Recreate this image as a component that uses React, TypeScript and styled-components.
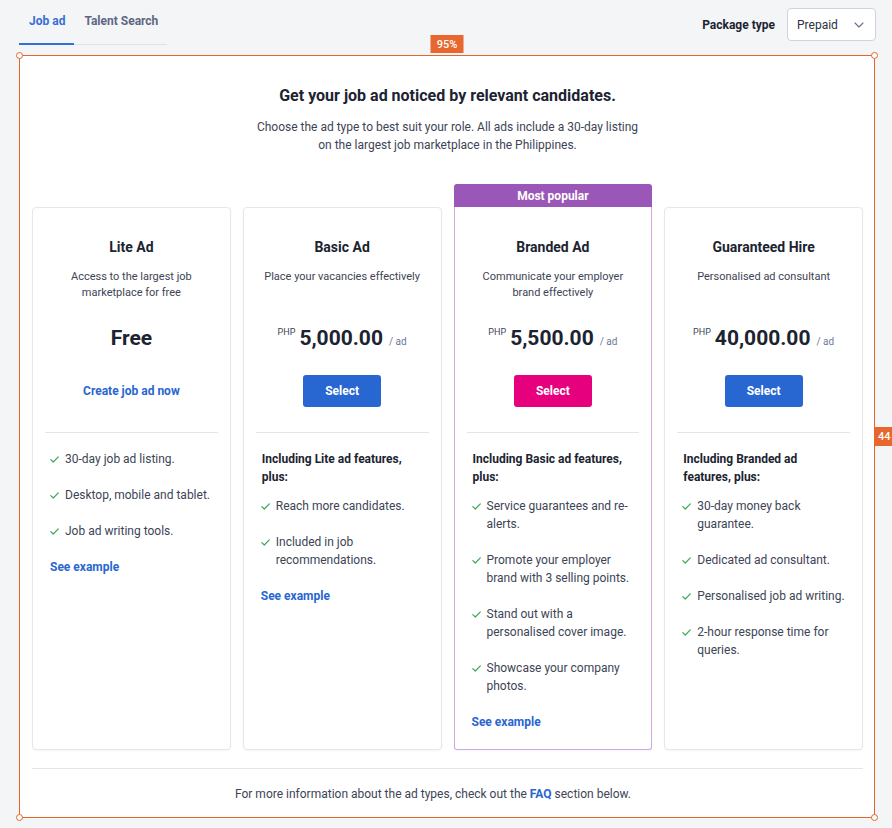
import React from "react";
import styled, { createGlobalStyle } from "styled-components";

const GlobalStyle = createGlobalStyle`
  html, body {
    margin: 0;
    padding: 0;
    overflow: hidden;
    background: #f4f5f7;
  }
  body {
    font-family: Roboto, "Liberation Sans", Arial, sans-serif;
    color: #1c2331;
    -webkit-font-smoothing: antialiased;
  }
  * { box-sizing: border-box; }
`;

const Page = styled.div`
  width: 892px;
  height: 828px;
  padding: 0 17px 0 19px;
  background: #f4f5f7;
`;

const Header = styled.div`
  display: flex;
  justify-content: space-between;
  align-items: flex-start;
  height: 45px;
`;

const TabList = styled.div`
  display: flex;
  border-bottom: 1px solid #dfe2e8;
`;

const Tab = styled.div<{ $active?: boolean }>`
  padding: 13px 9px 14px 10px;
  line-height: 16px;
  font-size: 12px;
  font-weight: 700;
  color: ${(p) => (p.$active ? "#3570d8" : "#5d6781")};
  border-bottom: 2px solid ${(p) => (p.$active ? "#3570d8" : "transparent")};
  margin-bottom: -1px;
`;

const PackageGroup = styled.div`
  display: flex;
  align-items: center;
  gap: 12px;
  margin-top: 8px;
`;

const PackageLabel = styled.span`
  font-size: 12px;
  font-weight: 700;
  color: #1c2331;
`;

const SelectBox = styled.div`
  width: 89px;
  height: 33px;
  background: #fff;
  border: 1px solid #cfd3da;
  border-radius: 4px;
  display: flex;
  align-items: center;
  justify-content: space-between;
  padding: 0 11px 0 9px;
  font-size: 12px;
  color: #2b3240;
  margin-right: -1px;
`;

const Panel = styled.div`
  position: relative;
  margin-top: 10px;
  background: #fff;
  padding: 31px 12px 16px 13px;
  height: 763px;
  display: flex;
  flex-direction: column;
`;

const Overlay = styled.div`
  position: absolute;
  inset: 0;
  border: 1px solid #e3662d;
  pointer-events: none;
`;

const Handle = styled.span<{ $top?: boolean; $left?: boolean }>`
  position: absolute;
  width: 7px;
  height: 7px;
  border-radius: 50%;
  background: #fff;
  border: 1px solid #e3662d;
  ${(p) => (p.$top ? "top: -4px;" : "bottom: -4px;")}
  ${(p) => (p.$left ? "left: -4px;" : "right: -4px;")}
`;

const TopBadge = styled.span`
  position: absolute;
  top: -21px;
  left: 50%;
  transform: translateX(-50%);
  width: 33px;
  height: 18px;
  background: #e8672e;
  color: #fff;
  font-size: 11px;
  font-weight: 500;
  display: flex;
  align-items: center;
  justify-content: center;
`;

const SideBadge = styled.span`
  position: absolute;
  top: 371px;
  left: calc(100% + 1px);
  width: 26px;
  height: 19px;
  background: #e8672e;
  color: #fff;
  font-size: 11px;
  font-weight: 500;
  display: flex;
  align-items: center;
  padding-left: 3px;
`;

const Heading = styled.h1`
  margin: 0;
  text-align: center;
  font-size: 16px;
  line-height: 20px;
  font-weight: 700;
  color: #1c2331;
`;

const Subtitle = styled.p`
  margin: 12px auto 0;
  width: 388px;
  text-align: center;
  font-size: 12px;
  line-height: 18px;
  color: #3d4455;
`;

const CardGrid = styled.div`
  margin-top: 30px;
  display: grid;
  grid-template-columns: repeat(4, 1fr);
  gap: 12px;
  flex: 1;
`;

const CardColumn = styled.div<{ $popular?: boolean }>`
  display: flex;
  flex-direction: column;
  padding-top: ${(p) => (p.$popular ? "0" : "23px")};
`;

const Banner = styled.div`
  height: 23px;
  background: #9a57b7;
  color: #fff;
  font-size: 12px;
  font-weight: 700;
  display: flex;
  align-items: center;
  justify-content: center;
  border-radius: 3px 3px 0 0;
`;

const Card = styled.div<{ $popular?: boolean }>`
  flex: 1;
  display: flex;
  flex-direction: column;
  background: #fff;
  border: 1px solid ${(p) => (p.$popular ? "#cfa9e0" : "#e5e7eb")};
  border-radius: ${(p) => (p.$popular ? "0 0 3px 3px" : "4px")};
  ${(p) => (p.$popular ? "border-top: none;" : "")}
  box-shadow: 0 1px 2px rgba(20, 30, 50, 0.04);
  padding-top: ${(p) => (p.$popular ? "30px" : "29px")};
`;

const CardTop = styled.div`
  display: flex;
  flex-direction: column;
  align-items: center;
  text-align: center;
`;

const CardTitle = styled.h2`
  margin: 0;
  font-size: 14px;
  line-height: 20px;
  font-weight: 700;
  color: #1c2331;
`;

const CardDesc = styled.p`
  margin: 12px 0 0;
  padding: 0 18px;
  min-height: 32px;
  font-size: 11px;
  line-height: 16px;
  color: #3d4455;
`;

const PriceRow = styled.div`
  margin-top: 23px;
  height: 28px;
  line-height: 28px;
  white-space: nowrap;
`;

const Currency = styled.span`
  font-size: 9px;
  line-height: 16px;
  vertical-align: top;
  color: #3d4455;
  margin-right: 4px;
`;

const Amount = styled.span`
  font-size: 21px;
  font-weight: 700;
  color: #1c2331;
`;

const Per = styled.span`
  font-size: 10px;
  color: #6b7a99;
  margin-left: 6px;
`;

const ActionRow = styled.div`
  margin-top: 23px;
  height: 32px;
  display: flex;
  align-items: center;
  justify-content: center;
`;

const Button = styled.button<{ $pink?: boolean }>`
  height: 32px;
  padding: 0 22px;
  border: none;
  border-radius: 3px;
  background: ${(p) => (p.$pink ? "#e6007e" : "#2866d1")};
  color: #fff;
  font-family: inherit;
  font-size: 12px;
  font-weight: 700;
`;

const TextLink = styled.a`
  font-size: 12px;
  font-weight: 700;
  line-height: 18px;
  color: #2866d1;
  text-decoration: none;
`;

const CardDivider = styled.hr`
  margin: 25px 12px 0;
  border: none;
  border-top: 1px solid #e3e5e9;
`;

const CardBottom = styled.div`
  padding: 17px 14px 18px 17px;
  display: flex;
  flex-direction: column;
  align-items: flex-start;
`;

const FeatureHeading = styled.div`
  font-size: 12px;
  line-height: 18px;
  font-weight: 700;
  color: #1c2331;
  margin-bottom: 11px;
  padding-left: 1px;
  padding-right: 4px;
`;

const FeatureList = styled.ul`
  list-style: none;
  margin: 0 0 18px;
  padding: 0;
  display: flex;
  flex-direction: column;
  gap: 18px;
`;

const FeatureItem = styled.li`
  display: flex;
  align-items: flex-start;
  gap: 6px;
  font-size: 12px;
  line-height: 18px;
  color: #3d4455;
`;

const CheckWrap = styled.span`
  flex: none;
  width: 9px;
  height: 18px;
  display: flex;
  align-items: center;
`;

const Footer = styled.div`
  margin-top: 18px;
  border-top: 1px solid #e3e5e9;
  padding: 16px 29px 0 0;
  text-align: center;
  font-size: 12px;
  line-height: 18px;
  color: #3d4455;
`;

const FooterLink = styled.a`
  color: #2866d1;
  font-weight: 700;
  text-decoration: none;
`;

const Check = () => (
  <CheckWrap>
    <svg width="9" height="7" viewBox="0 0 9 7" fill="none">
      <path d="M0.8 3.6 L3.3 6 L8.3 0.9" stroke="#3fa85a" strokeWidth="1.2" strokeLinecap="round" strokeLinejoin="round" />
    </svg>
  </CheckWrap>
);

const Chevron = () => (
  <svg width="10" height="6" viewBox="0 0 10 6" fill="none">
    <path d="M1 1 L5 5 L9 1" stroke="#6b7385" strokeWidth="1.1" strokeLinecap="round" strokeLinejoin="round" />
  </svg>
);

type Plan = {
  title: string;
  desc: string;
  price?: string;
  free?: boolean;
  popular?: boolean;
  heading?: string;
  features: string[];
  example: boolean;
};

const plans: Plan[] = [
  {
    title: "Lite Ad",
    desc: "Access to the largest job marketplace for free",
    free: true,
    features: ["30-day job ad listing.", "Desktop, mobile and tablet.", "Job ad writing tools."],
    example: true,
  },
  {
    title: "Basic Ad",
    desc: "Place your vacancies effectively",
    price: "5,000.00",
    heading: "Including Lite ad features, plus:",
    features: ["Reach more candidates.", "Included in job recommendations."],
    example: true,
  },
  {
    title: "Branded Ad",
    desc: "Communicate your employer brand effectively",
    price: "5,500.00",
    popular: true,
    heading: "Including Basic ad features, plus:",
    features: [
      "Service guarantees and re-alerts.",
      "Promote your employer brand with 3 selling points.",
      "Stand out with a personalised cover image.",
      "Showcase your company photos.",
    ],
    example: true,
  },
  {
    title: "Guaranteed Hire",
    desc: "Personalised ad consultant",
    price: "40,000.00",
    heading: "Including Branded ad features, plus:",
    features: [
      "30-day money back guarantee.",
      "Dedicated ad consultant.",
      "Personalised job ad writing.",
      "2-hour response time for queries.",
    ],
    example: false,
  },
];

const PlanCard = ({ plan }: { plan: Plan }) => (
  <CardColumn $popular={plan.popular}>
    {plan.popular && <Banner>Most popular</Banner>}
    <Card $popular={plan.popular}>
      <CardTop>
        <CardTitle>{plan.title}</CardTitle>
        <CardDesc>{plan.desc}</CardDesc>
        <PriceRow>
          {plan.free ? (
            <Amount>Free</Amount>
          ) : (
            <>
              <Currency>PHP</Currency>
              <Amount>{plan.price}</Amount>
              <Per>/ ad</Per>
            </>
          )}
        </PriceRow>
        <ActionRow>
          {plan.free ? (
            <TextLink href="#">Create job ad now</TextLink>
          ) : (
            <Button $pink={plan.popular}>Select</Button>
          )}
        </ActionRow>
      </CardTop>
      <CardDivider />
      <CardBottom>
        {plan.heading && <FeatureHeading>{plan.heading}</FeatureHeading>}
        <FeatureList>
          {plan.features.map((f) => (
            <FeatureItem key={f}>
              <Check />
              <span>{f}</span>
            </FeatureItem>
          ))}
        </FeatureList>
        {plan.example && <TextLink href="#">See example</TextLink>}
      </CardBottom>
    </Card>
  </CardColumn>
);

export default function App() {
  return (
    <>
      <GlobalStyle />
      <Page>
        <Header>
          <TabList>
            <Tab $active>Job ad</Tab>
            <Tab>Talent Search</Tab>
          </TabList>
          <PackageGroup>
            <PackageLabel>Package type</PackageLabel>
            <SelectBox>
              <span>Prepaid</span>
              <Chevron />
            </SelectBox>
          </PackageGroup>
        </Header>
        <Panel>
          <Heading>Get your job ad noticed by relevant candidates.</Heading>
          <Subtitle>
            Choose the ad type to best suit your role. All ads include a 30-day listing on the largest job
            marketplace in the Philippines.
          </Subtitle>
          <CardGrid>
            {plans.map((p) => (
              <PlanCard key={p.title} plan={p} />
            ))}
          </CardGrid>
          <Footer>
            For more information about the ad types, check out the <FooterLink href="#">FAQ</FooterLink> section
            below.
          </Footer>
          <Overlay>
            <Handle $top $left />
            <Handle $top />
            <Handle $left />
            <Handle />
            <TopBadge>95%</TopBadge>
            <SideBadge>44</SideBadge>
          </Overlay>
        </Panel>
      </Page>
    </>
  );
}
